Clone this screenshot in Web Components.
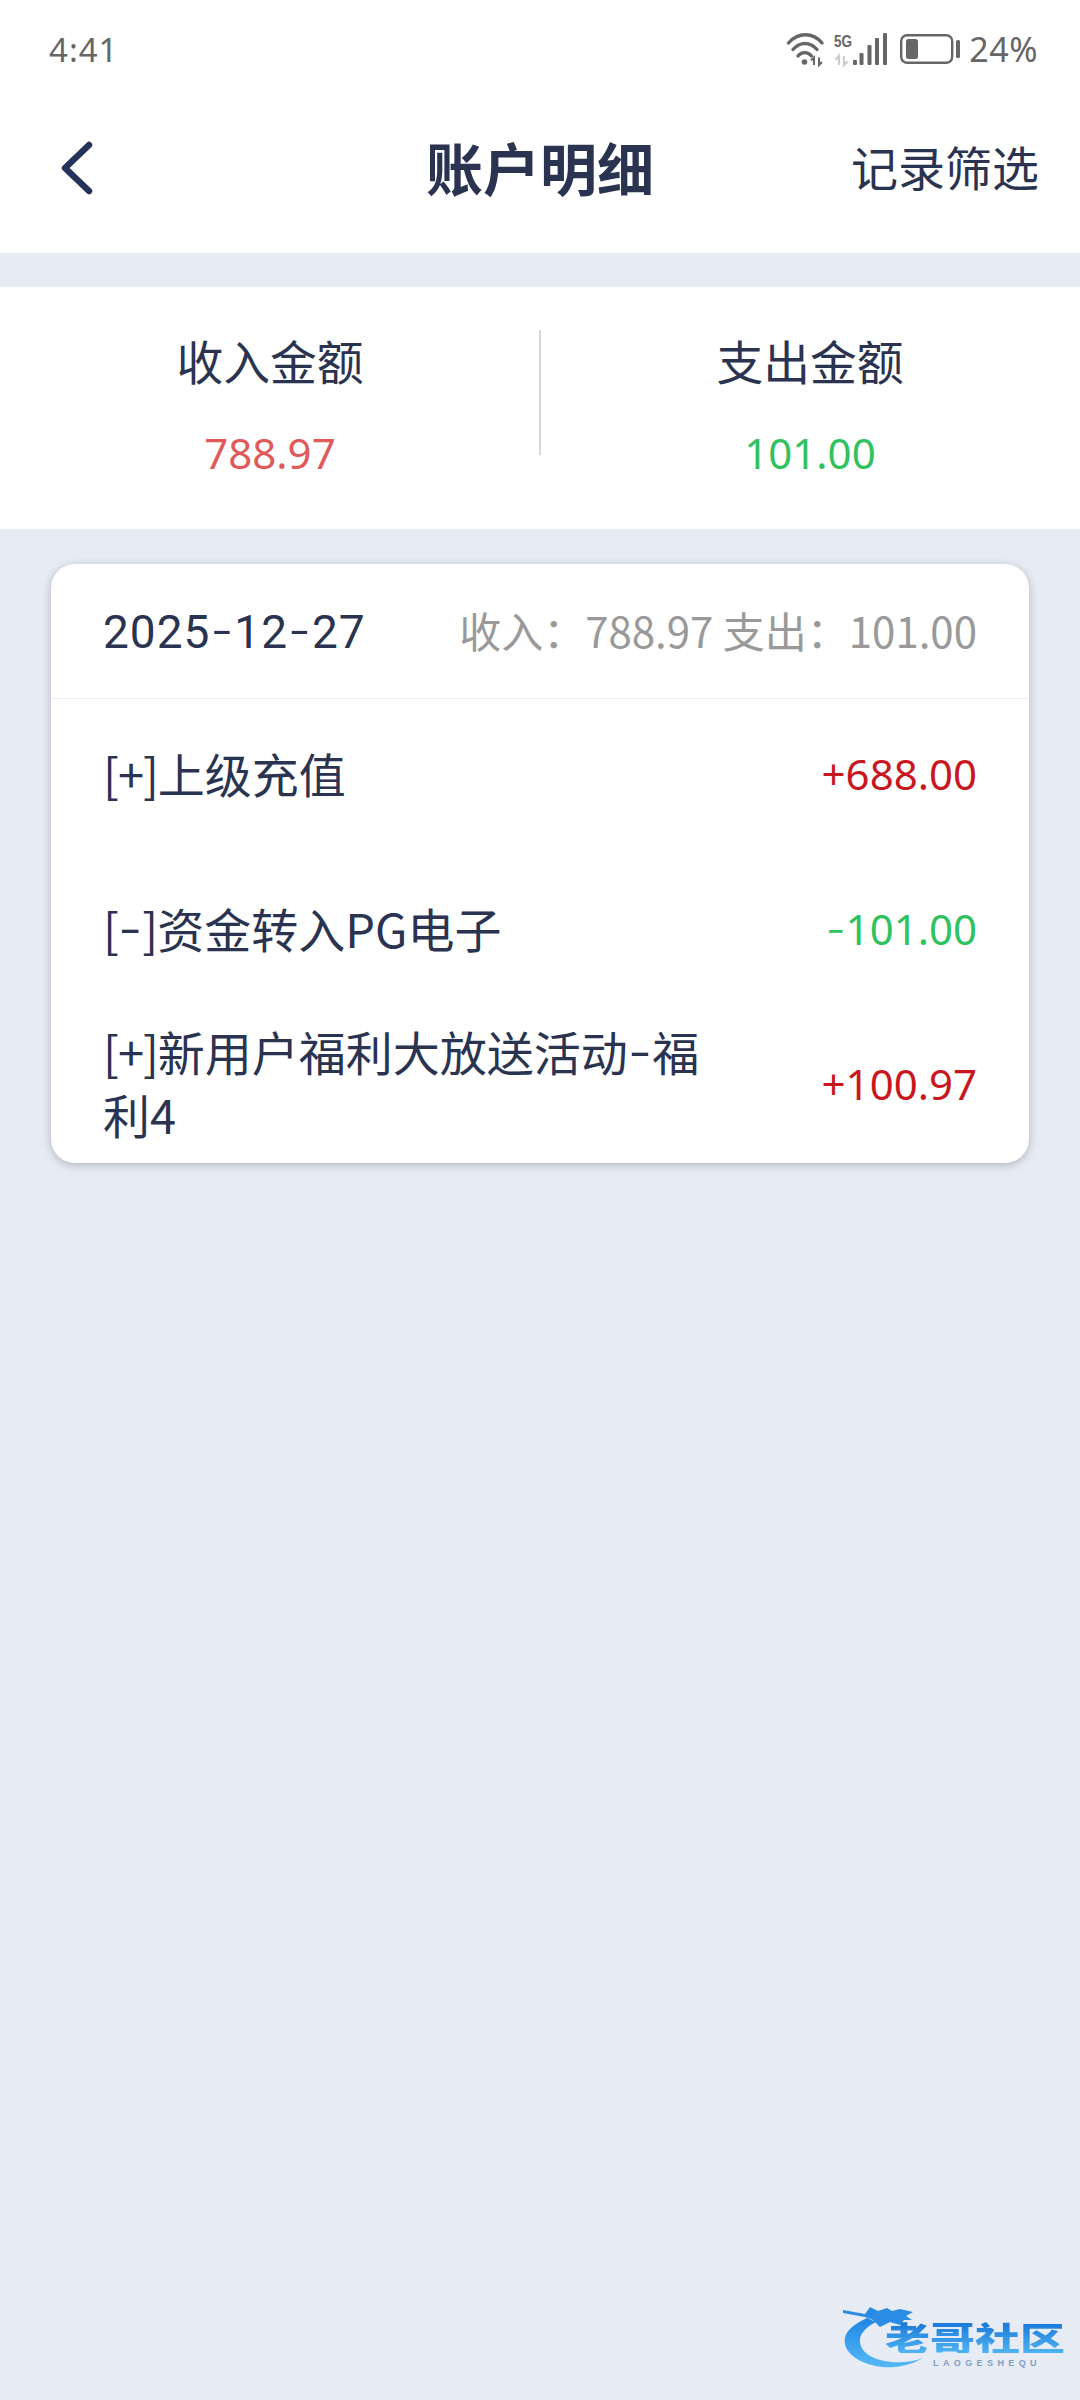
<!DOCTYPE html>
<html><head><meta charset="utf-8">
<style>
html,body{margin:0;padding:0;background:#e7ebf3;}
body{width:1080px;height:2400px;overflow:hidden;font-family:"Noto Sans CJK SC","Noto Sans",sans-serif;color:#2a3350;}
</style></head>
<body>
<app-page></app-page>
<template id="t-page">
<style>:host{display:flex;flex-direction:column;width:1080px;height:2400px;background:#e7ebf3;position:relative}
.list{display:block;padding:35px 51px 0}
.hy{font-family:Inter,sans-serif;font-weight:300;font-size:1.15em;line-height:0}
.br{letter-spacing:-1px}
</style>
<status-bar></status-bar>
<nav-bar></nav-bar>
<summary-band></summary-band>
<div class="list">
<day-card date="2025-12-27" sum="收入：788.97 支出：101.00">
<ledger-row amount="+688.00" color="#c8171f"><span class="br">[+]</span>上级充值</ledger-row>
<ledger-row amount="-101.00" color="#2fc25f"><span class="br">[</span><span class="hy">-</span><span class="br">]</span>资金转入PG电子</ledger-row>
<ledger-row amount="+100.97" color="#c8171f"><span class="br">[+]</span>新用户福利大放送活动<span class="hy">-</span>福<br>利4</ledger-row>
</day-card>
</div>
<site-mark></site-mark>
</template>
<script>
function def(name, html){
  customElements.define(name, class extends HTMLElement{
    connectedCallback(){
      if(this.shadowRoot) return;
      const r=this.attachShadow({mode:'open'});
      r.innerHTML = typeof html==='function' ? html(this) : html;
    }
  });
}
const hy=s=>s.replace(/-/g,'<span class="hy">-</span>');
def('status-bar',`<style>
:host{display:flex;align-items:center;justify-content:space-between;height:74px;padding:24px 0 0 49px;box-sizing:border-box;background:#fff;color:#666;font-family:"Noto Sans",sans-serif}
.t{font-size:33px;letter-spacing:1px;line-height:1}
.r{display:flex;align-items:center;padding-right:42px}
.p{font-size:34px;letter-spacing:.5px;margin-left:8px;line-height:1}
svg{display:block}
.five{font:700 16px/1 "Liberation Sans",sans-serif;fill:#666}
</style>
<span class="t">4:41</span>
<div class="r">
<svg width="175" height="38" viewBox="0 0 175 38" fill="none">
<g stroke="#666" stroke-linecap="round" fill="none" stroke-width="3.4">
<path d="M2.500 13C12 2 27 2 36 13"/>
<path d="M7 19.500C14 11.500 24 11.500 31 19.500"/>
<path d="M12 26C15.500 21.500 22 21.500 25.500 26"/>
</g>
<circle cx="18.500" cy="32" r="2.800" fill="#666"/>
<path d="M28 35V27.500l-3 3M33 27.500V35l3-3" stroke="#666" stroke-width="2" fill="none"/>
<text class="five" x="48" y="17" textLength="18" lengthAdjust="spacingAndGlyphs">5G</text>
<path d="M53 35V26l-3.500 3.500M58 26v9l3.500-3.500" stroke="#ccc" stroke-width="2.200" fill="none"/>
<g fill="#666">
<rect x="67" y="30" width="4" height="5" rx="1"/>
<rect x="73.500" y="23" width="4" height="12" rx="1"/>
<rect x="81.500" y="15" width="4" height="20" rx="1"/>
<rect x="89" y="8" width="4" height="27" rx="1"/>
<rect x="97" y="3" width="4" height="32" rx="1"/>
</g>
<rect x="115.200" y="5.200" width="51" height="27.600" rx="6" stroke="#666" stroke-width="2.400"/>
<rect x="120" y="9" width="12" height="20" rx="2.500" fill="#666"/>
<rect x="170" y="10" width="4" height="18" rx="1.500" fill="#666"/>
</svg>
<span class="p">24%</span>
</div>`);
def('nav-bar',`<style>
:host{display:grid;grid-template-columns:1fr auto 1fr;align-items:center;height:179px;box-sizing:border-box;padding:4px 41px 0;background:#fff;color:#2a3350}
svg{display:block;margin-left:19px}
.title{font-size:57px;font-weight:700;line-height:1;padding-top:2px}
.act{justify-self:end;font-size:47px;line-height:1}
</style>
<svg width="36" height="69" viewBox="0 0 36 69" fill="none"><path d="M29 14L5 37 29 60" stroke="#24325a" stroke-width="6.500" stroke-linecap="round" stroke-linejoin="round"/></svg>
<div class="title">账户明细</div>
<div class="act">记录筛选</div>`);
def('summary-band',`<style>
:host{display:grid;grid-template-columns:1fr 1fr;margin-top:34px;height:242px;background:#fff;position:relative}
.c{display:flex;flex-direction:column;align-items:center;padding-top:44px}
.l{font-size:46.800px;line-height:58px;color:#2a3350}
.v{font:42px/50px "Noto Sans",sans-serif;margin-top:39px}
.d{position:absolute;left:539px;top:43px;height:125px;width:2px;background:#d8d8dc}
</style>
<div class="c"><div class="l">收入金额</div><div class="v" style="color:#e05a5a">788.97</div></div>
<div class="c"><div class="l">支出金额</div><div class="v" style="color:#2fc25f">101.00</div></div>
<div class="d"></div>`);
def('day-card',h=>`<style>
:host{display:block;background:#fff;border-radius:24px;box-shadow:0 2px 8px rgba(60,64,90,.32);overflow:hidden}
.h{display:flex;align-items:center;justify-content:space-between;height:135px;box-sizing:border-box;padding:0 52px;border-bottom:1px solid #ececef}
.d{font:46px/1 "Roboto","Noto Sans",sans-serif;color:#2a3350;letter-spacing:1px;padding-top:2px}
.hy{font-family:Inter,sans-serif;font-weight:300;font-size:1.1em;line-height:0}
.s{font-size:42px;line-height:1;color:#999;margin-top:-2px}
</style>
<div class="h"><span class="d">${hy(h.getAttribute('date'))}</span><span class="s">${h.getAttribute('sum')}</span></div>
<slot></slot>`);
def('ledger-row',h=>`<style>
:host{display:flex;align-items:center;justify-content:space-between;height:154.670px;box-sizing:border-box;padding:0 52px}
.n{width:610px;font-size:47px;line-height:63px;color:#2a3350;margin-top:-7px}
.a{font:42px/1 "Noto Sans",sans-serif;color:${h.getAttribute('color')};margin-top:-4px}
.hy{font-family:Inter,sans-serif;font-weight:300;font-size:1.05em;line-height:0}
</style><div class="n"><slot></slot></div><div class="a">${hy(h.getAttribute('amount'))}</div>`);
def('site-mark',`<style>
:host{position:absolute;left:838px;top:2300px;width:236px;height:90px;display:block}
svg{position:absolute;left:0;top:0}
.t{position:absolute;left:47px;top:20px;font:900 45px/1 "Noto Sans CJK SC",sans-serif;white-space:nowrap;transform:scaleY(.74);transform-origin:0 0;background:linear-gradient(#1673d8,#4fb4f3);-webkit-background-clip:text;background-clip:text;color:transparent}
.e{position:absolute;left:95px;top:59px;font:700 9px/1 "Liberation Sans",sans-serif;letter-spacing:4.400px;color:#7f9fc6;white-space:nowrap}
</style>
<svg width="236" height="90" viewBox="0 0 236 90">
<defs><linearGradient id="g" x1="0" y1="0" x2="0" y2="1"><stop offset="0" stop-color="#1f86e4"/><stop offset="1" stop-color="#55b9f5"/></linearGradient></defs>
<path d="M29 18C12 26 5 34 7 44c3 18 44 34 78 14C62 67 24 62 22 42 21 34 28 27 38 22Z" fill="url(#g)"/>
<path d="M5 10L27 14 32 7 40 11 49 8 54 11 62 9 75 12 68 16 74 20 66 20 62 25 52 22 42 27 35 20 27 17 5 13Z" fill="#2a8ce4"/>
</svg>
<div class="t">老哥社区</div>
<div class="e">LAOGESHEQU</div>`);
def('app-page',document.getElementById('t-page').innerHTML);
</script>
</body></html>
